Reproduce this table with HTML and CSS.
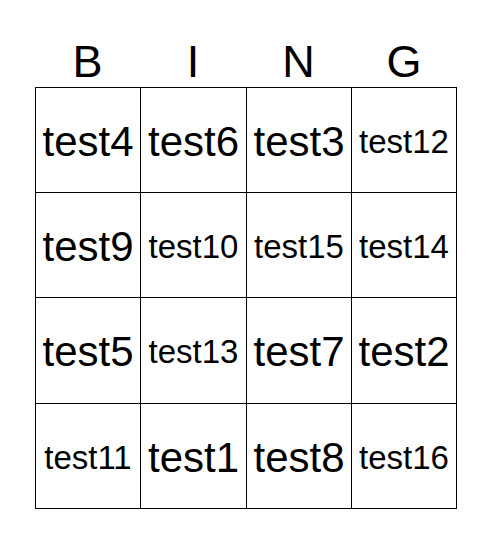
FILE: index.html
```html
<!DOCTYPE html>
<html>
<head>
<meta charset="utf-8">
<link rel="stylesheet" href="styles.css">
</head>
<body>
<div class="card">
  <div class="header">
    <div class="letter">B</div>
    <div class="letter">I</div>
    <div class="letter">N</div>
    <div class="letter">G</div>
  </div>
  <div class="grid">
    <div class="cell big">test4</div>
    <div class="cell big">test6</div>
    <div class="cell big">test3</div>
    <div class="cell small">test12</div>
    <div class="cell big">test9</div>
    <div class="cell small">test10</div>
    <div class="cell small">test15</div>
    <div class="cell small">test14</div>
    <div class="cell big">test5</div>
    <div class="cell small">test13</div>
    <div class="cell big">test7</div>
    <div class="cell big">test2</div>
    <div class="cell small">test11</div>
    <div class="cell big">test1</div>
    <div class="cell big">test8</div>
    <div class="cell small">test16</div>
  </div>
</div>
</body>
</html>
```
FILE: styles.css
```css
html, body {
  margin: 0;
  padding: 0;
  background: #fff;
}
body {
  font-family: "Liberation Sans", Arial, sans-serif;
  color: #000;
}
.card {
  padding: 39px 0 0 35px;
}
.header {
  display: grid;
  grid-template-columns: 105px 106px 105px 106px;
  height: 48px;
}
.letter {
  font-size: 45px;
  line-height: 45px;
  text-align: center;
}
.grid {
  display: grid;
  grid-template-columns: 104px 105px 104px 104px;
  grid-template-rows: 104px 104px 105px 104px;
  gap: 1px;
  padding: 1px;
  background: #000;
  width: max-content;
}
.cell {
  background: #fff;
  display: flex;
  align-items: center;
  justify-content: center;
  white-space: nowrap;
}
.big {
  font-size: 42px;
  padding-top: 3px;
}
.small {
  font-size: 33px;
  padding-top: 3px;
}
```
